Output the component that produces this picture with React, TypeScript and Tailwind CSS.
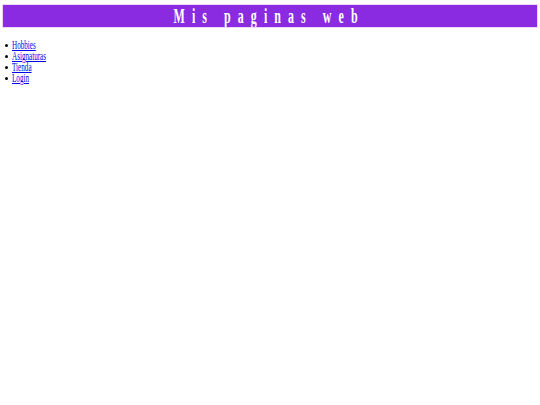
export default function App() {
  const links = ["Hobbies", "Asignaturas", "Tienda", "Login"];

  return (
    <div className="min-h-[405px] w-[540px] bg-white px-[3px] pt-[5px] font-['Liberation_Serif',serif]">
      <header className="flex h-[22px] items-center justify-center overflow-hidden bg-[#8a2be2] shadow-[0_0_0_1px_#f2d4fa]">
        <h1 className="inline-block origin-center scale-x-[0.57] whitespace-nowrap pl-[4px] pr-[6px] text-[21px] font-bold leading-none tracking-[12.4px] text-white">
          Mis paginas web
        </h1>
      </header>

      <ul className="mt-[13px] flex flex-col text-[11.5px] leading-[11px]">
        {links.map((l) => (
          <li key={l} className="flex h-[11px] items-center">
            <span className="ml-[2px] mr-[4px] h-[3px] w-[3px] rounded-full bg-black" />
            <a href="#" className="inline-block origin-left scale-x-[0.62] text-[#0000ee] underline">
              {l}
            </a>
          </li>
        ))}
      </ul>
    </div>
  );
}
